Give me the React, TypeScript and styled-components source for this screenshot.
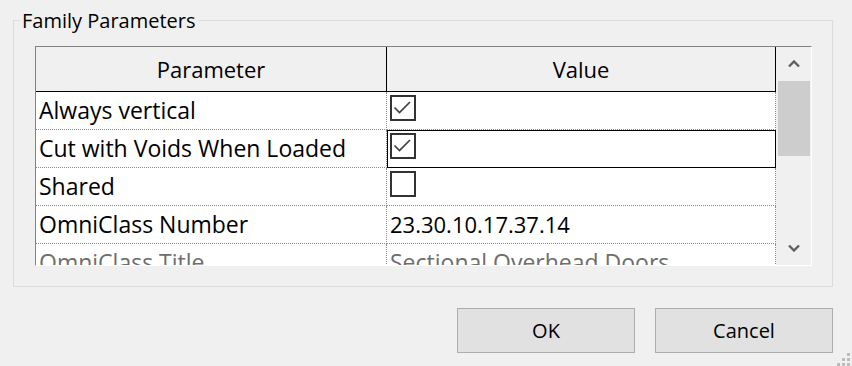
import React from 'react';
import styled, { createGlobalStyle } from 'styled-components';

const GlobalStyle = createGlobalStyle`
  html, body { margin: 0; padding: 0; background: #f0f0f0; }
  body { font-family: 'Open Sans', 'Noto Sans', sans-serif; color: #000; }
`;

const Window = styled.div`
  position: relative;
  width: 852px;
  height: 366px;
  box-sizing: border-box;
  padding: 20px 19px 0 13px;
  background: #f0f0f0;
  overflow: hidden;
`;

const GroupBox = styled.section`
  position: relative;
  box-sizing: border-box;
  height: 267px;
  border: 1px solid #dcdcdc;
  padding: 25px 0 0 21px;
`;

const Legend = styled.span`
  position: absolute;
  left: 6px;
  top: -13px;
  padding: 0 2px;
  background: #f0f0f0;
  font-size: 20px;
  line-height: 25px;
`;

const Grid = styled.div`
  display: flex;
  box-sizing: border-box;
  width: 777px;
  height: 220px;
  border-top: 1px solid #828282;
  border-left: 1px solid #828282;
  border-right: 1px solid #ffffff;
  border-bottom: 1px solid #ffffff;
  background: #ffffff;
`;

const Table = styled.div`
  display: flex;
  flex-direction: column;
  width: 740px;
  overflow: hidden;
`;

const HeaderRow = styled.div`
  display: flex;
  flex-shrink: 0;
  height: 45px;
  box-sizing: border-box;
  border-bottom: 1px solid #000;
  background: #f0f0f0;
`;

const HeaderCell = styled.div<{ $w: number }>`
  box-sizing: border-box;
  width: ${(p) => p.$w}px;
  border-right: 1px solid #000;
  text-align: center;
  font-size: 22px;
  line-height: 44px;
`;

const Row = styled.div`
  display: flex;
  flex-shrink: 0;
  height: 38px;
`;

const Cell = styled.div<{ $w: number; $selected?: boolean; $muted?: boolean }>`
  box-sizing: border-box;
  width: ${(p) => p.$w}px;
  padding-left: 3px;
  border-right: 1px dotted #8c8c8c;
  border-bottom: 1px dotted #8c8c8c;
  font-size: 23px;
  line-height: 37px;
  white-space: nowrap;
  overflow: hidden;
  color: ${(p) => (p.$muted ? '#6d6d6d' : '#000')};
  outline: ${(p) => (p.$selected ? '1px solid #000' : 'none')};
  outline-offset: -1px;
`;

const ValueText = styled.span`
  font-size: 22px;
`;

const CheckBox = styled.span`
  display: block;
  box-sizing: border-box;
  width: 26px;
  height: 26px;
  margin-top: 3px;
  border: 2px solid #333333;
  background: #ffffff;
  svg { display: block; }
`;

const ScrollBar = styled.div`
  display: flex;
  flex-direction: column;
  width: 35px;
  background: #f0f0f0;
`;

const ArrowButton = styled.div`
  display: flex;
  align-items: center;
  justify-content: center;
  height: 34px;
  flex-shrink: 0;
`;

const Track = styled.div`
  flex: 1;
`;

const Thumb = styled.div`
  height: 75px;
  margin: 0 1px 0 2px;
  background: #cdcdcd;
`;

const ButtonRow = styled.div`
  display: flex;
  justify-content: flex-end;
  gap: 20px;
  margin-top: 21px;
`;

const Button = styled.button`
  width: 178px;
  height: 45px;
  box-sizing: border-box;
  border: 1px solid #adadad;
  background: #e1e1e1;
  font-family: 'Open Sans', 'Noto Sans', sans-serif;
  font-size: 20px;
  color: #000;
  padding: 0;
`;

const SizeGrip = styled.svg`
  position: absolute;
  right: 0;
  bottom: 0;
`;

const Check = ({ checked }: { checked: boolean }) => (
  <CheckBox>
    {checked && (
      <svg width="22" height="22" viewBox="0 0 22 22">
        <polyline points="2.5,10.5 7.5,15.5 18,5" fill="none" stroke="#3c3c3c" strokeWidth="1.6" />
      </svg>
    )}
  </CheckBox>
);

const Chevron = ({ down }: { down?: boolean }) => (
  <svg width="12" height="8" viewBox="0 0 12 8">
    <polyline
      points={down ? '1,1.5 6,6.5 11,1.5' : '1,6.5 6,1.5 11,6.5'}
      fill="none"
      stroke="#606060"
      strokeWidth="2.4"
    />
  </svg>
);

const COL1 = 351;
const COL2 = 389;

const rows: { name: string; value: React.ReactNode; selected?: boolean; muted?: boolean }[] = [
  { name: 'Always vertical', value: <Check checked /> },
  { name: 'Cut with Voids When Loaded', value: <Check checked />, selected: true },
  { name: 'Shared', value: <Check checked={false} /> },
  { name: 'OmniClass Number', value: <ValueText>23.30.10.17.37.14</ValueText> },
  { name: 'OmniClass Title', value: 'Sectional Overhead Doors', muted: true },
];

export default function App() {
  return (
    <Window>
      <GlobalStyle />
      <GroupBox>
        <Legend>Family Parameters</Legend>
        <Grid>
          <Table>
            <HeaderRow>
              <HeaderCell $w={COL1}>Parameter</HeaderCell>
              <HeaderCell $w={COL2}>Value</HeaderCell>
            </HeaderRow>
            {rows.map((r) => (
              <Row key={r.name}>
                <Cell $w={COL1} $muted={r.muted}>{r.name}</Cell>
                <Cell $w={COL2} $muted={r.muted} $selected={r.selected}>{r.value}</Cell>
              </Row>
            ))}
          </Table>
          <ScrollBar>
            <ArrowButton><Chevron /></ArrowButton>
            <Track><Thumb /></Track>
            <ArrowButton><Chevron down /></ArrowButton>
          </ScrollBar>
        </Grid>
      </GroupBox>
      <ButtonRow>
        <Button type="button">OK</Button>
        <Button type="button">Cancel</Button>
      </ButtonRow>
      <SizeGrip width="16" height="14" viewBox="0 0 16 14">
        <rect x="11" y="1" width="3" height="3" fill="#bcbcbc" />
        <rect x="6" y="6" width="3" height="3" fill="#bcbcbc" />
        <rect x="11" y="6" width="3" height="3" fill="#bcbcbc" />
        <rect x="1" y="11" width="3" height="3" fill="#bcbcbc" />
        <rect x="6" y="11" width="3" height="3" fill="#bcbcbc" />
        <rect x="11" y="11" width="3" height="3" fill="#bcbcbc" />
      </SizeGrip>
    </Window>
  );
}
